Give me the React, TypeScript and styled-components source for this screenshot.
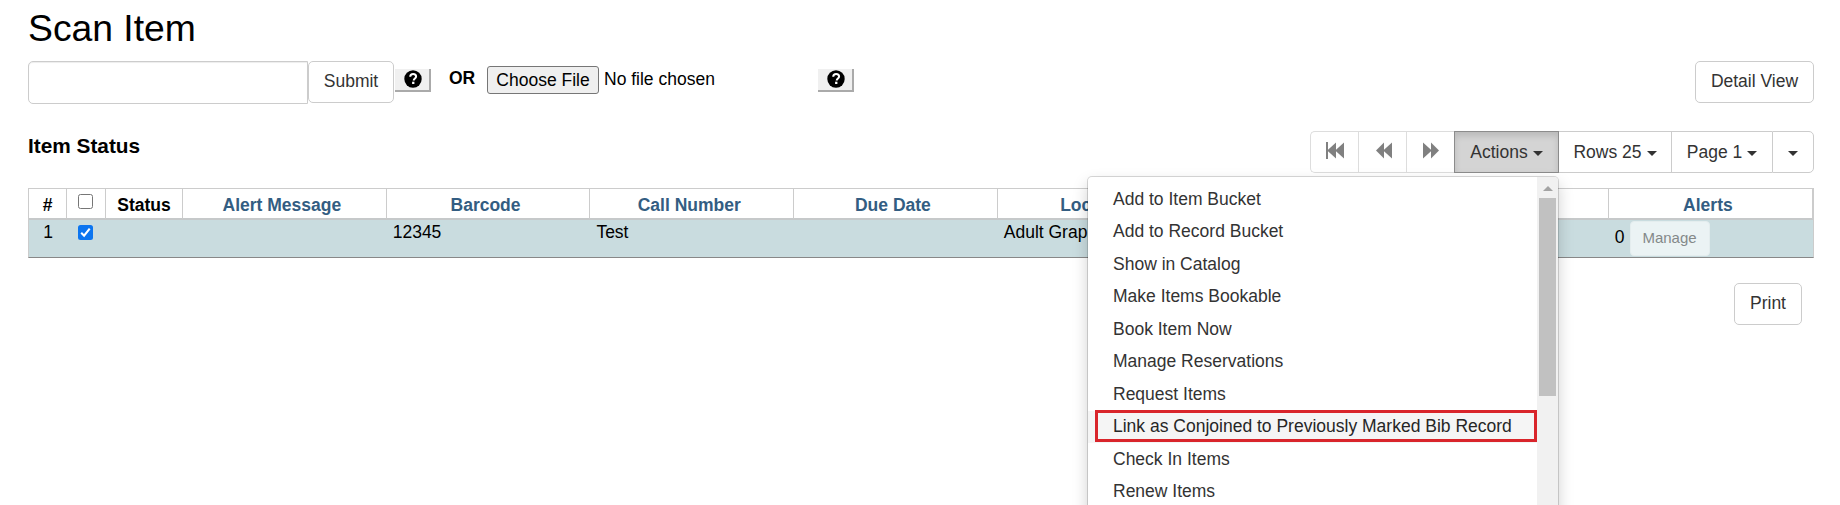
import React from "react";
import styled, { createGlobalStyle, css } from "styled-components";

const Global = createGlobalStyle`
  *, *::before, *::after { box-sizing: border-box; }
  html, body { margin: 0; background: #fff; height: 505px; overflow: hidden; }
  body { font: 17.5px/25px "Liberation Sans", Arial, sans-serif; color: #000; }
  button, input { font: inherit; margin: 0; }
`;

const Page = styled.main`
  width: 1840px;
  height: 505px;
  padding: 0 26px 0 28px;
  overflow: hidden;
`;
const Title = styled.h1`
  margin: 0;
  padding-top: 7px;
  height: 61px;
  font-size: 37.3px;
  line-height: 42px;
  font-weight: 400;
`;
const ScanBar = styled.div`
  display: flex;
  align-items: flex-start;
  height: 70px;
`;
const BarcodeInput = styled.input`
  width: 280px;
  height: 43px;
  border: 1px solid #ccc;
  border-radius: 5px 0 0 5px;
  box-shadow: inset 0 1px 1px rgba(0, 0, 0, 0.075);
  background: #fff;
  outline: none;
`;
const Button = styled.button<{ $width: number }>`
  width: ${(p) => p.$width}px;
  height: 42px;
  padding: 0 0 1px;
  border: 1px solid #ccc;
  border-radius: 5px;
  background: #fff;
  color: #333;
  line-height: 25px;
`;
const HelpButton = styled.button<{ $gap: number }>`
  width: 36px;
  height: 23px;
  margin: 8px 0 0 ${(p) => p.$gap}px;
  padding: 0 0 1px 1px;
  display: flex;
  align-items: center;
  justify-content: center;
  border: 0 solid #aaa;
  border-width: 0 2px 2px 0;
  background: #f0f0f0;
`;
const Or = styled.strong`
  width: 38px;
  margin: 5px 0 0 18px;
`;
const FilePicker = styled.div`
  display: flex;
  width: 331px;
  margin-top: 5px;
  gap: 5px;
`;
const ChooseFile = styled.button`
  width: 112px;
  height: 28px;
  padding: 0;
  border: 1px solid #767676;
  border-radius: 3px;
  background: #efefef;
`;
const FileName = styled.span`
  line-height: 26px;
`;
const Spacer = styled.div`
  flex: 1;
`;
const GridHead = styled.div`
  display: flex;
  justify-content: space-between;
  height: 57px;
`;
const Subtitle = styled.h2`
  margin: 2px 0 0;
  font-size: 20.8px;
  line-height: 26px;
`;
const Toolbar = styled.div`
  display: flex;
  position: relative;
  height: 42px;
`;
const Tool = styled.button<{ $width: number; $active?: boolean; $dim?: boolean }>`
  width: ${(p) => p.$width}px;
  height: 42px;
  padding: ${(p) => (p.$dim ? "0 0 3px" : "0")};
  display: flex;
  align-items: center;
  justify-content: center;
  gap: 5px;
  border: 1px solid ${(p) => (p.$dim ? "#ddd" : "#ccc")};
  border-right-width: 0;
  background: #fff;
  color: ${(p) => (p.$dim ? "#808080" : "#333")};
  white-space: nowrap;
  &:first-child { border-radius: 5px 0 0 5px; }
  &:nth-last-child(2) { border-right-width: 1px; border-radius: 0 5px 5px 0; }
  ${(p) => p.$active && css`
    border: 1px solid #8c8c8c;
    background: #d4d4d4;
    box-shadow: inset 0 4px 6px rgba(0, 0, 0, 0.125);
    & + button { border-left-width: 0; }
  `}
`;
const Caret = styled.span`
  margin-top: 3px;
  border: 5px solid transparent;
  border-top-color: #333;
  border-bottom: 0;
`;
const Menu = styled.div`
  position: absolute;
  z-index: 2;
  top: 45px;
  left: -223px;
  width: 472px;
  height: 400px;
  display: flex;
  border: 1px solid rgba(0, 0, 0, 0.15);
  border-radius: 5px;
  background: #fff;
  box-shadow: 0 7px 15px rgba(0, 0, 0, 0.175);
  overflow: hidden;
  background-clip: padding-box;
`;
const MenuList = styled.div`
  flex: 1;
  padding-top: 6px;
`;
const MenuItem = styled.div<{ $hot?: boolean }>`
  position: relative;
  height: 32.5px;
  padding: 3.75px 0 0 25px;
  color: #333;
  white-space: nowrap;
  ${(p) => p.$hot && css`
    background: #f5f5f5;
    color: #262626;
    &::after {
      content: "";
      position: absolute;
      inset: -1px 0 1px 7px;
      border: 3px solid #d9252b;
    }
  `}
`;
const ScrollTrack = styled.div`
  width: 21px;
  padding: 9px 2px 0;
  display: flex;
  flex-direction: column;
  align-items: center;
  background: #f1f1f1;
`;
const ScrollUp = styled.span`
  border: 5px solid transparent;
  border-bottom-color: #a3a3a3;
  border-top: 0;
`;
const ScrollThumb = styled.div`
  width: 17px;
  height: 198px;
  margin-top: 7px;
  background: #c1c1c1;
`;
const Table = styled.div`
  display: grid;
  grid-template-columns: 38px 39px 77px repeat(7, 203.7px) 1fr;
  border: 1px solid #ccc;
  border-bottom-color: #888;
  height: 70px;
  grid-template-rows: 31px 37px;
`;
const HeadCell = styled.div<{ $plain?: boolean }>`
  padding: ${(p) => (p.$plain ? "4px 0 0" : "4px 5px 0 0")};
  border-right: 1px solid #ccc;
  border-bottom: 2px solid #c6c9ca;
  text-align: center;
  font-weight: 700;
  color: ${(p) => (p.$plain ? "#000" : "#335d82")};
`;
const Cell = styled.div<{ $center?: boolean }>`
  padding: ${(p) => (p.$center ? "0" : "0 0 0 6px")};
  background: #c9dcdf;
  text-align: ${(p) => (p.$center ? "center" : "left")};
  white-space: nowrap;
`;
const AlertCell = styled(Cell)`
  display: flex;
  gap: 5px;
  padding-top: 1px;
  line-height: 32px;
`;
const ManageButton = styled.button`
  width: 80px;
  height: 35px;
  padding: 0 0 2px;
  border: 1px solid #e4edee;
  border-radius: 4px;
  background: #ebf3f4;
  color: #848989;
  font-size: 15px;
`;
const Box = styled.span<{ $on?: boolean }>`
  display: flex;
  width: 15px;
  height: 15px;
  margin: ${(p) => (p.$on ? "5px 12px 0 11px" : "1px 12px 0 11px")};
  border: ${(p) => (p.$on ? "0" : "1px solid #767676")};
  border-radius: 2.5px;
  background: ${(p) => (p.$on ? "#0b75f0" : "#fff")};
`;
const Footer = styled.div`
  display: flex;
  justify-content: flex-end;
  padding: 25px 12px 0 0;
`;

const HelpIcon = () => (
  <svg width="18" height="18" viewBox="0 0 18 18">
    <circle cx="9" cy="9" r="8.7" fill="#000" />
    <path d="M6.2 6.8C6.3 4.9 7.4 4 9.1 4c1.8 0 3 1 3 2.5 0 1.9-2.4 2-2.4 3.9" fill="none" stroke="#fff" strokeWidth="2" />
    <rect x="8.1" y="11.7" width="2.3" height="2.3" fill="#fff" />
  </svg>
);
const FirstIcon = () => (
  <svg width="18" height="17" viewBox="0 0 18 17" fill="currentColor">
    <path d="M0 0h2v7.7L10 .4v7.3L18 .4v16.2L10 9.3v7.3L2 9.3V17H0z" />
  </svg>
);
const BackIcon = () => (
  <svg width="16" height="17" viewBox="-1 0 16 17" fill="currentColor" overflow="visible">
    <path d="M0 8.5L8 .4v7.3L16 .4v16.2L8 9.3v7.3z" />
  </svg>
);
const ForwardIcon = () => (
  <svg width="16" height="17" viewBox="0 0 16 17" fill="currentColor">
    <path d="M16 8.5L8 .4v7.3L0 .4v16.2l8-7.3v7.3z" />
  </svg>
);
const Check = () => (
  <svg width="15" height="15" viewBox="0 0 15 15">
    <path d="M3.2 7.8l2.9 2.9 5.6-7" fill="none" stroke="#fff" strokeWidth="2.1" />
  </svg>
);

const actions = [
  "Add to Item Bucket",
  "Add to Record Bucket",
  "Show in Catalog",
  "Make Items Bookable",
  "Book Item Now",
  "Manage Reservations",
  "Request Items",
  "Link as Conjoined to Previously Marked Bib Record",
  "Check In Items",
  "Renew Items",
];
const columns = ["Alert Message", "Barcode", "Call Number", "Due Date", "Location", "", "", "Alerts"];
const values = ["", "12345", "Test", "", "Adult Graphic", "", ""];

const ActionsMenu = () => (
  <Menu>
    <MenuList>
      {actions.map((a, i) => (
        <MenuItem key={a} $hot={i === 7}>{a}</MenuItem>
      ))}
    </MenuList>
    <ScrollTrack>
      <ScrollUp />
      <ScrollThumb />
    </ScrollTrack>
  </Menu>
);

export default function App() {
  return (
    <Page>
      <Global />
      <Title>Scan Item</Title>
      <ScanBar>
        <BarcodeInput />
        <Button $width={86}>Submit</Button>
        <HelpButton $gap={1}><HelpIcon /></HelpButton>
        <Or>OR</Or>
        <FilePicker>
          <ChooseFile>Choose File</ChooseFile>
          <FileName>No file chosen</FileName>
        </FilePicker>
        <HelpButton $gap={0}><HelpIcon /></HelpButton>
        <Spacer />
        <Button $width={119}>Detail View</Button>
      </ScanBar>
      <GridHead>
        <Subtitle>Item Status</Subtitle>
        <Toolbar>
          <Tool $width={48} $dim><FirstIcon /></Tool>
          <Tool $width={48} $dim><BackIcon /></Tool>
          <Tool $width={48} $dim><ForwardIcon /></Tool>
          <Tool $width={105} $active>Actions<Caret /></Tool>
          <Tool $width={112}>Rows 25<Caret /></Tool>
          <Tool $width={101}>Page 1<Caret /></Tool>
          <Tool $width={42}><Caret /></Tool>
          <ActionsMenu />
        </Toolbar>
      </GridHead>
      <Table>
        <HeadCell $plain>#</HeadCell>
        <HeadCell $plain><Box /></HeadCell>
        <HeadCell $plain>Status</HeadCell>
        {columns.map((c, i) => <HeadCell key={i}>{c}</HeadCell>)}
        <Cell $center>1</Cell>
        <Cell $center><Box $on><Check /></Box></Cell>
        <Cell />
        {values.map((v, i) => <Cell key={i}>{v}</Cell>)}
        <AlertCell>0<ManageButton>Manage</ManageButton></AlertCell>
      </Table>
      <Footer>
        <Button $width={68}>Print</Button>
      </Footer>
    </Page>
  );
}
